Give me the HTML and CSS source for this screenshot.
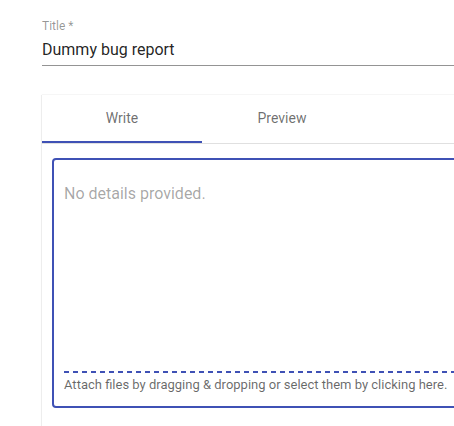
FILE: index.html
```html
<!DOCTYPE html>
<html lang="en">
<head>
<meta charset="utf-8">
<title>Bug report</title>
<link rel="stylesheet" href="styles.css">
</head>
<body>
<div class="page">
  <div class="field">
    <label class="field-label">Title *</label>
    <div class="field-input">Dummy bug report</div>
  </div>
  <div class="card">
    <div class="tabs">
      <div class="tab tab-active">Write</div>
      <div class="tab">Preview</div>
    </div>
    <div class="card-body">
      <div class="editor">
        <div class="editor-text">No details provided.</div>
        <div class="editor-attach">Attach files by dragging &amp; dropping or select them by clicking here.</div>
      </div>
    </div>
  </div>
</div>
</body>
</html>
```

FILE: styles.css
```css
html, body {
  margin: 0;
  padding: 0;
  background: #ffffff;
  overflow: hidden;
}
body {
  font-family: Roboto, "Liberation Sans", sans-serif;
  width: 454px;
  height: 426px;
}
.page {
  padding-left: 42px;
  width: 620px;
}
.field {
  padding-top: 19px;
}
.field-label {
  display: block;
  font-size: 12px;
  line-height: 14px;
  color: rgba(0, 0, 0, 0.42);
}
.field-input {
  font-size: 16px;
  line-height: 19px;
  color: rgba(0, 0, 0, 0.87);
  padding: 7px 0 6px;
  border-bottom: 1px solid rgba(0, 0, 0, 0.42);
}
.card {
  margin-top: 29px;
  background: #fff;
  box-shadow: 0 0 1px rgba(0, 0, 0, 0.2), -1px 0 1px rgba(0, 0, 0, 0.04);
  height: 332px;
}
.tabs {
  display: flex;
  border-bottom: 1px solid #e0e0e0;
}
.tab {
  width: 160px;
  height: 46px;
  display: flex;
  align-items: center;
  justify-content: center;
  font-size: 14px;
  color: rgba(0, 0, 0, 0.58);
  border-bottom: 2px solid transparent;
}
.tab-active {
  border-bottom-color: #3f51b5;
}
.card-body {
  padding: 14px 0 0 10px;
}
.editor {
  border: 2px solid #3f51b5;
  border-radius: 4px;
  height: 246px;
  display: flex;
  flex-direction: column;
  padding: 0 10px;
}
.editor-text {
  flex: 1;
  font-size: 16px;
  line-height: 19px;
  color: rgba(0, 0, 0, 0.36);
  padding-top: 24px;
}
.editor-attach {
  font-size: 13px;
  line-height: 15px;
  color: rgba(0, 0, 0, 0.6);
  padding: 6px 0 14px;
  white-space: nowrap;
  background-image: repeating-linear-gradient(to right, #3f51b5 0, #3f51b5 5px, transparent 5px, transparent 9px);
  background-size: 100% 2px;
  background-repeat: no-repeat;
  background-position: top left;
}
```
